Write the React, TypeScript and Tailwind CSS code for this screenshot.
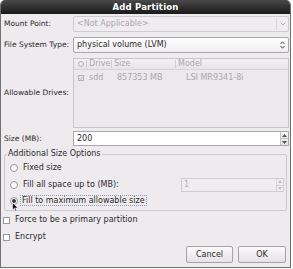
import React from "react";

const Radio = ({ checked }: { checked?: boolean }) => (
  <span className="w-[8px] h-[8px] rounded-full border border-[#9a989a] bg-gradient-to-b from-[#f4f4f4] to-[#ffffff] flex items-center justify-center shrink-0">
    {checked && <span className="w-[4px] h-[4px] rounded-full bg-[#3a3a3a]" />}
  </span>
);

const Check = () => (
  <span className="w-[7px] h-[7px] border border-[#9a989a] bg-white shrink-0" />
);

const Spin = () => (
  <div className="flex flex-col w-[8px] h-full border-l border-[#c4c2c4] bg-gradient-to-b from-[#f6f5f6] to-[#e2e0e2]">
    <div className="flex-1 flex items-center justify-center border-b border-[#c4c2c4]">
      <svg width="5" height="3" viewBox="0 0 5 3"><path d="M0 3 L2.5 0 L5 3 Z" fill="#555" /></svg>
    </div>
    <div className="flex-1 flex items-center justify-center">
      <svg width="5" height="3" viewBox="0 0 5 3"><path d="M0 0 L2.5 3 L5 0 Z" fill="#555" /></svg>
    </div>
  </div>
);

export default function App() {
  return (
    <div
      className="w-[293px] h-[269px] bg-white text-[8px] leading-none text-[#2a2a2a] relative whitespace-nowrap"
      style={{ fontFamily: '"DejaVu Sans", "Liberation Sans", sans-serif' }}
    >
      <div className="w-[291px] h-[268px] flex flex-col border-x border-b border-[#707070] rounded-t-[5px] overflow-hidden bg-[#eeebee]">
        <div className="h-[14px] shrink-0 bg-gradient-to-b from-[#4a4a4a] to-[#1a1a1a] text-white font-bold text-[8.5px] flex items-center justify-center tracking-[0.2px]">
          Add Partition
        </div>
        <div className="flex flex-col pl-[3px] pr-[1px]">
          {/* Mount point */}
          <div className="flex items-center h-[16px] mt-[2px]">
            <div className="w-[69px] shrink-0 text-[7.5px]">Mount Point:</div>
            <div className="flex-1 h-full flex items-center border border-[#cfcccf] rounded-[2px] bg-[#efedef] text-[#aaa8aa]">
              <span className="pl-[3px] flex-1">&lt;Not Applicable&gt;</span>
              <span className="w-[12px] h-[12px] border-l border-[#d8d6d8] flex items-center justify-center">
                <svg width="6" height="4" viewBox="0 0 6 4"><path d="M0.5 0.5 L3 3 L5.5 0.5" stroke="#b0aeb0" fill="none" strokeWidth="1" /></svg>
              </span>
            </div>
          </div>
          {/* FS type */}
          <div className="flex items-center h-[16px] mt-[5px]">
            <div className="w-[69px] shrink-0 text-[7.5px]">File System Type:</div>
            <div className="flex-1 h-full flex items-center border border-[#a9a7a9] rounded-[2px] bg-gradient-to-b from-[#ffffff] to-[#eeeeee]">
              <span className="pl-[3px] flex-1">physical volume (LVM)</span>
              <span className="w-[12px] flex items-center justify-center">
                <svg width="5" height="8" viewBox="0 0 5 8"><path d="M0.5 3 L2.5 0.8 L4.5 3 M0.5 5 L2.5 7.2 L4.5 5" stroke="#444" fill="none" strokeWidth="1" /></svg>
              </span>
            </div>
          </div>
          {/* Allowable drives */}
          <div className="flex items-center h-[70px] mt-[5px]">
            <div className="w-[69px] shrink-0 text-[7.5px]">Allowable Drives:</div>
            <div className="flex-1 h-full border border-[#c8c6c8] bg-[#ece9ec] flex flex-col text-[#a9a7a9]">
              <div className="h-[11px] flex items-center border-b border-[#d6d4d6] bg-gradient-to-b from-[#f3f2f3] to-[#e6e4e6]">
                <span className="w-[11px] flex justify-center pl-[2px]">
                  <span className="w-[6px] h-[6px] rounded-full border border-[#b4b2b4]" />
                </span>
                <span className="w-[1px] h-[8px] bg-[#cfcdcf] ml-[1px]" />
                <span className="w-[24px] pl-[2px]">Drive</span>
                <span className="w-[1px] h-[8px] bg-[#cfcdcf]" />
                <span className="w-[63px] pl-[2px]">Size</span>
                <span className="w-[1px] h-[8px] bg-[#cfcdcf]" />
                <span className="pl-[2px]">Model</span>
              </div>
              <div className="h-[12px] flex items-center mt-[2px]">
                <span className="w-[11px] flex justify-center pl-[2px]">
                  <span className="w-[6px] h-[6px] border border-[#b4b2b4] flex items-center justify-center">
                    <svg width="5" height="5" viewBox="0 0 5 5"><path d="M0.5 2.5 L2 4 L4.5 0.5" stroke="#a0a0a0" fill="none" strokeWidth="1" /></svg>
                  </span>
                </span>
                <span className="w-[26px] pl-[4px]">sdd</span>
                <span className="w-[63px] pl-[6px]">857353 MB</span>
                <span className="pl-[12px]">LSI MR9341-8i</span>
              </div>
            </div>
          </div>
          {/* Size */}
          <div className="flex items-center h-[15px] mt-[3px]">
            <div className="w-[69px] shrink-0 text-[7.5px]">Size (MB):</div>
            <div className="flex-1 h-full flex border border-[#a9a7a9] bg-white">
              <span className="flex-1 pl-[3px] flex items-center">200</span>
              <Spin />
            </div>
          </div>
          {/* Frame */}
          <div className="relative mt-[8px] mr-[2px] h-[57px] border border-[#cdcacd] rounded-[2px] flex flex-col pl-[5px]">
            <span className="absolute -top-[5px] left-[2px] bg-[#eeebee] px-[1px]">Additional Size Options</span>
            <div className="flex items-center h-[12px] mt-[7px] gap-[5px]">
              <Radio />
              <span>Fixed size</span>
            </div>
            <div className="flex items-center h-[14px] mt-[4px] gap-[5px]">
              <Radio />
              <span className="flex-1">Fill all space up to (MB):</span>
              <div className="w-[103px] h-[14px] mr-[2px] flex border border-[#cfcdcf] bg-[#efedef] text-[#b0aeb0]">
                <span className="flex-1 pl-[2px] flex items-center">1</span>
                <div className="flex flex-col w-[7px] h-full border-l border-[#d6d4d6]">
                  <div className="flex-1 flex items-center justify-center border-b border-[#d6d4d6]">
                    <svg width="4" height="3" viewBox="0 0 4 3"><path d="M0 3 L2 0 L4 3 Z" fill="#c0bec0" /></svg>
                  </div>
                  <div className="flex-1 flex items-center justify-center">
                    <svg width="4" height="3" viewBox="0 0 4 3"><path d="M0 0 L2 3 L4 0 Z" fill="#c0bec0" /></svg>
                  </div>
                </div>
              </div>
            </div>
            <div className="flex items-center h-[11px] mt-[3px] gap-[2px]">
              <Radio checked />
              <span className="border border-dotted border-[#8b98ad] px-[1px] h-[11px] flex items-center">Fill to maximum allowable size</span>
            </div>
          </div>
          {/* Checkboxes */}
          <div className="flex items-center gap-[5px] h-[12px] mt-[3px] -ml-[1px]">
            <Check />
            <span>Force to be a primary partition</span>
          </div>
          <div className="flex items-center gap-[5px] h-[12px] mt-[5px] -ml-[1px]">
            <Check />
            <span>Encrypt</span>
          </div>
          {/* Buttons */}
          <div className="flex justify-end gap-[5px] mt-[3px] pr-[3px]">
            <button className="w-[47px] h-[17px] border border-[#a4a2a4] rounded-[2px] bg-gradient-to-b from-[#fbfbfb] to-[#e4e2e4] text-[8px]">Cancel</button>
            <button className="w-[48px] h-[17px] border border-[#a4a2a4] rounded-[2px] bg-gradient-to-b from-[#fbfbfb] to-[#e4e2e4] text-[8px]">OK</button>
          </div>
        </div>
      </div>
      <svg className="absolute left-[12px] top-[202px]" width="7" height="10" viewBox="0 0 7 10">
        <path d="M0.5 0.5 L0.5 8 L2.3 6.3 L3.6 9.3 L4.8 8.8 L3.5 5.9 L6 5.9 Z" fill="#111" stroke="#fff" strokeWidth="0.6" />
      </svg>
    </div>
  );
}
